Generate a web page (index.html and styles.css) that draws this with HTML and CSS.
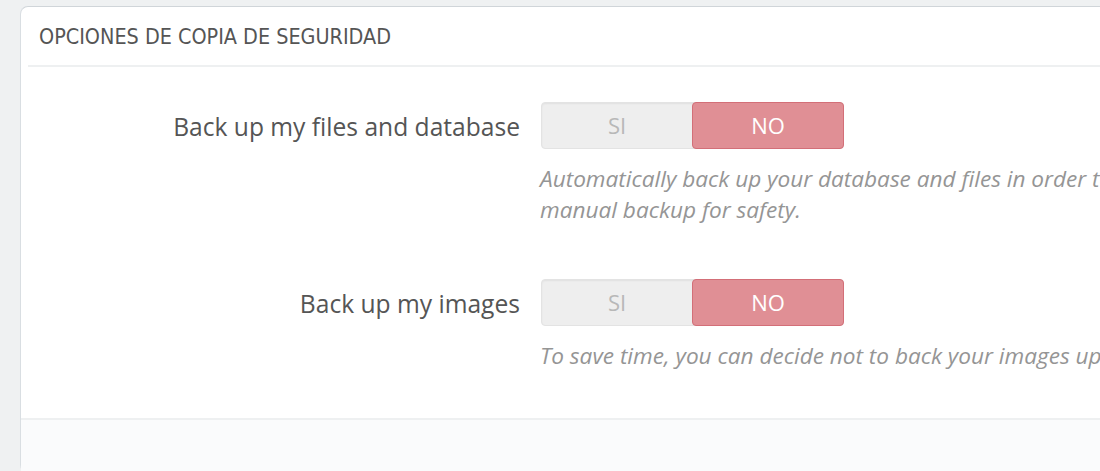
FILE: index.html
```html
<!DOCTYPE html>
<html>
<head>
<meta charset="utf-8">
<link rel="stylesheet" href="styles.css">
</head>
<body>
<div class="panel">
  <div class="panel-heading">OPCIONES DE COPIA DE SEGURIDAD</div>
  <div class="panel-body">
    <div class="form-row">
      <div class="label">Back up my files and database</div>
      <div class="control">
        <div class="switch">
          <span class="opt off">SI</span>
          <span class="opt on">NO</span>
        </div>
        <p class="help">Automatically back up your database and files in order to restore your shop if necessary. This is experimental: you should still perform your own<br>manual backup for safety.</p>
      </div>
    </div>
    <div class="form-row second">
      <div class="label">Back up my images</div>
      <div class="control">
        <div class="switch">
          <span class="opt off">SI</span>
          <span class="opt on">NO</span>
        </div>
        <p class="help">To save time, you can decide not to back your images up. In any case, always make sure you did back them up manually.</p>
      </div>
    </div>
  </div>
  <div class="panel-footer"></div>
</div>
</body>
</html>
```
FILE: styles.css
```css
html, body {
  margin: 0;
  padding: 0;
  background: #eff1f2;
  overflow: hidden;
  height: 471px;
}
.panel {
  margin: 6px 0 0 20px;
  width: 1200px;
  background: #fff;
  border: 1px solid #d9dee2;
  border-top-color: #d0d5d9;
  border-radius: 8px;
  box-sizing: border-box;
}
.panel-heading {
  margin-left: 7px;
  padding-left: 11px;
  height: 60px;
  box-sizing: border-box;
  border-bottom: 2px solid #eef0f1;
  font-family: "DejaVu Sans Condensed", "Liberation Sans Narrow", "DejaVu Sans", sans-serif;
  font-stretch: condensed;
  font-size: 21.4px;
  color: #555;
  line-height: 60px;
}
.panel-body {
  padding-top: 35px;
  font-family: "Open Sans", sans-serif;
}
.form-row {
  display: flex;
  gap: 20px;
}
.form-row.second {
  margin-top: 54px;
}
.label {
  width: 499px;
  flex: none;
  text-align: right;
  font-size: 24.6px;
  color: #555;
  line-height: 49px;
  height: 47px;
}
.control {
  width: 640px;
  flex: none;
}
.switch {
  display: flex;
  width: 303px;
  height: 47px;
  margin-left: 1px;
  box-sizing: border-box;
  border-radius: 4px;
  background: #eeeeee;
  border: 1px solid #e3e3e3;
  box-shadow: inset 0 1px 2px rgba(0,0,0,0.06);
}
.opt {
  flex: 1;
  text-align: center;
  line-height: 45px;
  font-size: 22px;
}
.opt.off {
  color: #b8b8b8;
}
.opt.on {
  background: #e08f95;
  color: #fff;
  border: 1px solid #d36f78;
  border-radius: 4px;
  margin: -1px -1px -1px 0;
}
.help {
  margin: 14px 0 0 0;
  font-style: italic;
  font-size: 22.6px;
  line-height: 31px;
  color: #959595;
  white-space: nowrap;
}
.panel-footer {
  margin-top: 47px;
  border-top: 2px solid #eef0f1;
  background: #fafbfc;
  height: 52px;
}
```
